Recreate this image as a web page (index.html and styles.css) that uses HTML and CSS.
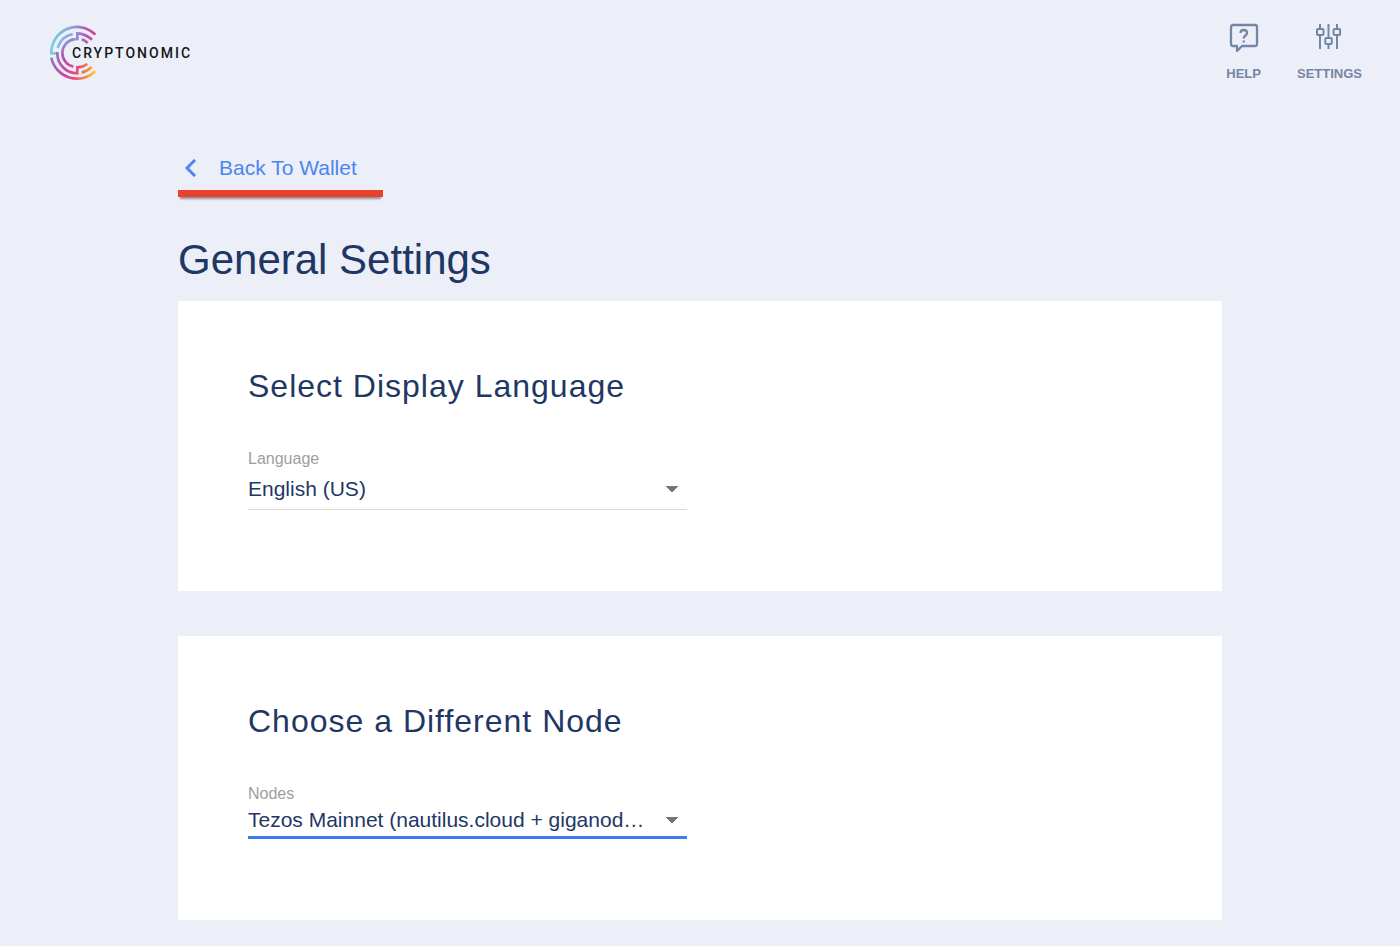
FILE: index.html
```html
<!DOCTYPE html>
<html lang="en">
<head>
<meta charset="utf-8">
<title>General Settings</title>
<link rel="stylesheet" href="styles.css">
</head>
<body>
<header class="topbar">
  <a class="brand" href="#" aria-label="Cryptonomic">
    <svg class="brand-mark" viewBox="0 0 144 168" fill="none" stroke="url(#rainbow)" stroke-width="8">
      <defs>
        <linearGradient id="rainbow" gradientUnits="userSpaceOnUse" x1="40" y1="20" x2="120" y2="160">
          <stop offset="0" stop-color="#78bfe2"/>
          <stop offset=".25" stop-color="#9a7fcc"/>
          <stop offset=".5" stop-color="#c242a4"/>
          <stop offset=".72" stop-color="#e0508a"/>
          <stop offset=".86" stop-color="#f07a50"/>
          <stop offset="1" stop-color="#fac63a"/>
        </linearGradient>
        <linearGradient id="dusk" gradientUnits="userSpaceOnUse" x1="5" y1="50" x2="140" y2="45">
          <stop offset="0" stop-color="#78d0e4"/>
          <stop offset=".5" stop-color="#83a9dc"/>
          <stop offset=".75" stop-color="#a569bd"/>
          <stop offset="1" stop-color="#d0389c"/>
        </linearGradient>
        <linearGradient id="dawn" gradientUnits="userSpaceOnUse" x1="10" y1="95" x2="140" y2="145">
          <stop offset="0" stop-color="#8f78c8"/>
          <stop offset=".35" stop-color="#c84aa6"/>
          <stop offset=".6" stop-color="#e04a86"/>
          <stop offset=".8" stop-color="#f2804c"/>
          <stop offset="1" stop-color="#fbc93a"/>
        </linearGradient>
      </defs>
      <path stroke="url(#dusk)" d="M142 29A77 77 0 0 0 10 85H28"/>
      <path stroke="url(#dawn)" d="M28 81A60 60 0 0 0 88 145V127Q105 127 118 117"/>
      <path stroke="url(#dawn)" d="M10 98A79 79 0 0 0 142 139"/>
      <path stroke="url(#dusk)" d="M29 69A60 60 0 0 1 74 27"/>
      <path stroke="url(#dusk)" d="M72 45Q79 42 88 42V25Q112 26 132 44"/>
      <path stroke="url(#dusk)" d="M101 43Q111 46 119 54"/>
      <path d="M76 43A42 42 0 0 0 76 125"/>
      <path stroke="url(#dawn)" d="M101 143Q118 139 131 126"/>
    </svg>
    <span class="brand-name">CRYPTONOMIC</span>
  </a>
  <nav class="tools">
    <button class="tool" type="button">
      <svg class="tool-icon" viewBox="0 0 30 30" fill="none" stroke="currentColor" stroke-width="2.300" stroke-linejoin="round">
        <path d="M4 2H26Q28 2 28 4V21Q28 23 26 23H13L8 28V23H4Q2 23 2 21V4Q2 2 4 2Z"/>
        <path d="M11.500 10Q11.500 7 14.700 7Q18 7 18 9.800Q18 11.500 16.200 12.800Q14.800 13.800 14.800 15.500M14.800 17.500V19.500"/>
      </svg>
      <span>HELP</span>
    </button>
    <button class="tool" type="button">
      <svg class="tool-icon" viewBox="0 0 30 30" fill="none" stroke="currentColor" stroke-width="2">
        <path d="M6 1V6M6 12V26M14.500 1V15M14.500 21V26M23 1V6M23 12V26"/>
        <rect x="3" y="6" width="6.500" height="6" rx="1"/>
        <rect x="11.300" y="15" width="6.500" height="6" rx="1"/>
        <rect x="19.600" y="6" width="6.500" height="6" rx="1"/>
      </svg>
      <span>SETTINGS</span>
    </button>
  </nav>
</header>
<main class="page">
  <a class="back" href="#">
    <svg class="back-icon" viewBox="0 0 12 18" fill="none" stroke="currentColor" stroke-width="3"><path d="M10 1L2 9L10 17"/></svg>
    <span>Back To Wallet</span>
  </a>
  <h1 class="title">General Settings</h1>
  <section class="card">
    <h2 class="card-title">Select Display Language</h2>
    <div class="field">
      <label class="label" for="language">Language</label>
      <select class="select" id="language"><option>English (US)</option></select>
    </div>
  </section>
  <section class="card">
    <h2 class="card-title">Choose a Different Node</h2>
    <div class="field">
      <label class="label" for="node">Nodes</label>
      <select class="select select-active" id="node"><option>Tezos Mainnet (nautilus.cloud + giganode.io)</option></select>
    </div>
  </section>
</main>
</body>
</html>
```

FILE: styles.css
```css
* { box-sizing: border-box; }

body {
  margin: 0;
  background: #eceff7;
  color: #1e3764;
  font-family: "Liberation Sans", Arial, sans-serif;
}

.topbar {
  display: flex;
  justify-content: space-between;
  align-items: flex-start;
  padding: 23px 36px 0 48px;
}

.brand {
  display: flex;
  align-items: center;
  margin-top: 2px;
  color: #15161a;
  text-decoration: none;
}

.brand-mark { width: 48px; height: 56px; }

.brand-name {
  margin-left: -24px;
  font: 500 14px/20px Roboto, sans-serif;
  letter-spacing: 2px;
}

.tools { display: flex; gap: 32px; }

.tool {
  display: flex;
  flex-direction: column;
  align-items: center;
  gap: 13px;
  padding: 0 2px;
  border: 0;
  background: none;
  color: #7486a6;
  font: bold 13px/16px "Liberation Sans", Arial, sans-serif;
}

.tool-icon { width: 30px; height: 30px; }

.page {
  width: 75%;
  max-width: 1044px;
  margin: 0 auto;
  padding: 71px 0 26px;
}

.back {
  display: inline-flex;
  align-items: center;
  gap: 22px;
  padding: 0 26px 7px 7px;
  border-bottom: 7px solid #e8432a;
  box-shadow: 0 4px 2px -2px rgba(0, 0, 0, .4);
  color: #4a86f2;
  font-size: 21px;
  line-height: 30px;
  text-decoration: none;
}

.back-icon { width: 12px; height: 18px; }

.title {
  margin: 37px 0 15px;
  font-size: 42px;
  font-weight: 400;
  line-height: 52px;
}

.card {
  padding: 65px 70px 81px;
  background: #fff;
}

.card + .card { margin-top: 45px; }

.card-title {
  margin: 0 0 43px;
  font-size: 32px;
  font-weight: 400;
  line-height: 40px;
  letter-spacing: 1px;
}

.field {
  display: flex;
  flex-direction: column;
  max-width: 439px;
}

.label {
  color: #9e9e9e;
  font-size: 16px;
  line-height: 20px;
}

.select {
  appearance: none;
  padding: 0 40px 0 0;
  border: 0;
  border-bottom: 1px solid #d8d8d8;
  border-radius: 0;
  background: conic-gradient(from -45deg at 50% 100%, #757575 90deg, transparent 0) no-repeat right 9px center / 12px 6px;
  color: #1e3764;
  font: 21px/40px "Liberation Sans", Arial, sans-serif;
  text-overflow: ellipsis;
  outline: 0;
}

.select-active { border-bottom: 3px solid #3f7cf0; line-height: 32px; }
```
